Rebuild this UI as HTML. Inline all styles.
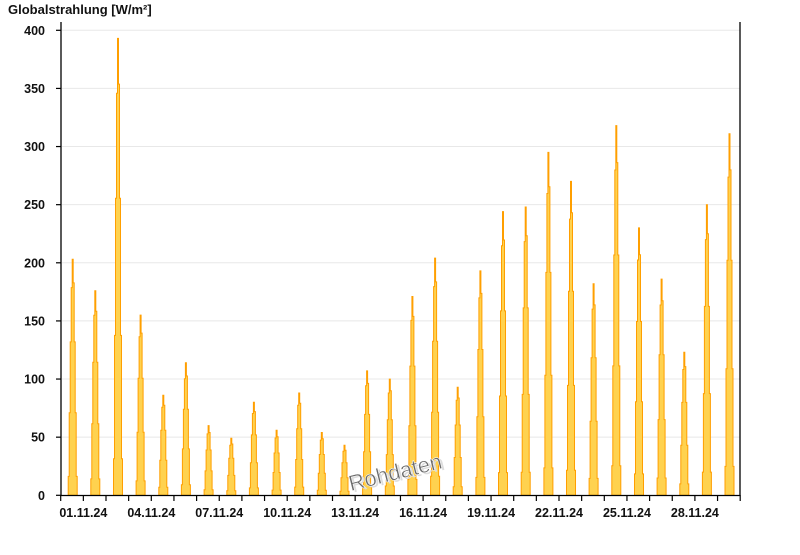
<!DOCTYPE html>
<html><head><meta charset="utf-8"><style>
body{margin:0;background:#fff;width:800px;height:550px;overflow:hidden}
text{font-family:"Liberation Sans",Arial,sans-serif;font-weight:bold}
</style></head><body>
<svg id="s" width="800" height="550" xmlns="http://www.w3.org/2000/svg">
<text x="8" y="14" font-size="13" fill="#111">Globalstrahlung [W/m²]</text>
<g id="grid"></g>
<g id="bars"></g>
<text x="349" y="481" font-size="22" fill="#ddd" transform="rotate(-14 398 470)" style="font-weight:normal">Rohdaten</text>
<text x="347" y="479" font-size="22" fill="#6a6a6a" stroke="#fff" stroke-width="0.5" transform="rotate(-14 398 470)" style="font-weight:normal">Rohdaten</text>
<line x1="61" y1="22" x2="61" y2="495.5" stroke="#000" stroke-width="1.3"/>
<line x1="740" y1="22" x2="740" y2="495.5" stroke="#000" stroke-width="1.3"/>
<line x1="61" y1="495.5" x2="740" y2="495.5" stroke="#000" stroke-width="1.3"/>
<g id="ax"></g>
</svg>
<script>
var NS="http://www.w3.org/2000/svg";
function el(p,t,a,txt){var e=document.createElementNS(NS,t);for(var k in a)e.setAttribute(k,a[k]);if(txt)e.textContent=txt;document.getElementById(p).appendChild(e);}
var y0=495.3,sc=1.1625;
for(var v=0;v<=400;v+=50){var y=y0-v*sc;
 if(v>0)el("grid","line",{x1:62,x2:740,y1:y,y2:y,stroke:"#e8e8e8","stroke-width":1});
 el("ax","line",{x1:56,x2:61,y1:y,y2:y,stroke:"#000","stroke-width":1.2});
 el("ax","text",{x:45,y:y+4.5,"font-size":12.5,"text-anchor":"end",fill:"#111"},String(v));}
var x0=60.7,d=22.65;
for(var i=0;i<=30;i++){var x=x0+i*d;el("ax","line",{x1:x,x2:x,y1:495,y2:501,stroke:"#000","stroke-width":1.2});}
var dates=["01","04","07","10","13","16","19","22","25","28"];
for(var j=0;j<dates.length;j++){var x=x0+(1+3*j)*d;el("ax","text",{x:x,y:517,"font-size":12.5,"text-anchor":"middle",fill:"#111"},dates[j]+".11.24");}
var pk=[203,176,393,155,86,114,60,49,80,56,88,54,43,107,100,171,204,93,193,244,248,295,270,182,318,230,186,123,250,311];
var prof=[[-4.5,0],[-4.5,.08],[-3.5,.08],[-3.5,.35],[-2.5,.35],[-2.5,.65],[-1.5,.65],[-1.5,.88],[-.5,.88],[-.5,1],[.5,1],[.5,.9],[1.5,.9],[1.5,.65],[2.5,.65],[2.5,.35],[3.5,.35],[3.5,.08],[4.5,.08],[4.5,0]];
for(var i=0;i<30;i++){var c=x0+i*d+12;var pts=prof.map(function(p){return (c+p[0]).toFixed(1)+","+(y0-pk[i]*sc*p[1]).toFixed(1)}).join(" ");
 el("bars","polygon",{points:pts,fill:"#ffd24f",stroke:"#ff9f00","stroke-width":1});}
</script>
</body></html>
